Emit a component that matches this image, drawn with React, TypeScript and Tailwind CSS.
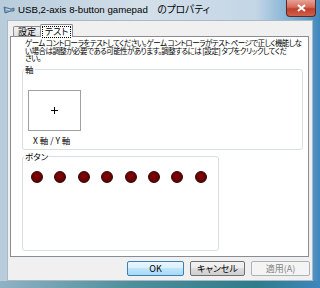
import React from 'react';

const jp = "font-['Noto_Sans_CJK_JP',sans-serif] [font-feature-settings:'palt']";

const GroupBox: React.FC<{ label: string; className?: string; children: React.ReactNode }> = ({
  label, className, children,
}) => (
  <fieldset className={`m-0 p-0 border border-[#d5dfe5] rounded-[3px] ${className ?? ''}`}>
    <legend className={`ml-[1px] px-[1px] text-[8.5px] leading-[10px] text-black ${jp}`}>{label}</legend>
    {children}
  </fieldset>
);

const PadIcon = () => (
  <svg width="12" height="10" viewBox="0 0 12 10">
    <path d="M1 2 L8 4 L11 3 L11 6 L8 6 L2 8 Z" fill="#7fa4c4" stroke="#3d5f80" strokeWidth="0.8" />
    <path d="M3 4 L7 5" stroke="#dfeaf4" strokeWidth="0.8" />
  </svg>
);

export default function App() {
  return (
    <div className="w-[320px] h-[288px] flex flex-col bg-[linear-gradient(to_right,#b8ccdb,#d3dfe9_45%,#c3d6e6_80%,#5f9fcb_96%,#3f86bd)] overflow-hidden">
      {/* Title bar */}
      <div className="h-[20px] flex items-start">
        <div className="mt-[5px] ml-[3px]">
          <PadIcon />
        </div>
        <span className="ml-[3px] mt-[3px] text-[9.7px] leading-[12px] text-black font-['Liberation_Sans','Noto_Sans_CJK_JP',sans-serif] whitespace-nowrap">
          USB,2-axis 8-button gamepad　<span className={jp}>のプロパティ</span>
        </span>
        <button className="ml-auto mr-[4px] w-[30px] h-[17px] rounded-b-[4px] border border-t-0 border-[#5a2a24] bg-[linear-gradient(to_bottom,#e7a195,#d56b5a_45%,#c1402c_55%,#d0604a)] flex items-center justify-center">
          <svg width="9" height="8" viewBox="0 0 9 8">
            <path d="M1 1 L8 7 M8 1 L1 7" stroke="#fff" strokeWidth="2" />
          </svg>
        </button>
      </div>

      {/* Client area */}
      <div className="mx-[7px] h-[261px] bg-[#f0f0f0] border border-[#a9b9c6] flex flex-col">
        {/* Tabs */}
        <div className={`mt-[3px] h-[13px] flex items-end ml-[5px] text-[9px] ${jp}`}>
          <div className="h-[11px] w-[28px] text-center border border-b-0 border-[#898c95] bg-[linear-gradient(#f2f2f2,#dcdcdc)] leading-[10px] rounded-t-[2px]">
            設定
          </div>
          <div className="h-[13px] px-[1px] pt-[1px] border border-b-0 border-[#898c95] bg-white leading-[10px] rounded-t-[2px] -ml-[1px] relative z-10">
            <span className="block border border-dotted border-black px-[2px] whitespace-nowrap">テスト</span>
          </div>
        </div>

        {/* Tab panel */}
        <div className="ml-[2px] mr-[3px] h-[221px] bg-white border border-[#898c95] -mt-[1px] flex flex-col">
          <div className={`pl-[14px] pt-[2px] text-[7.5px] leading-[7.5px] tracking-[-0.55px] text-black ${jp}`}>
            <div className="whitespace-nowrap">ゲーム コントローラをテストしてください。ゲーム コントローラがテスト ページで正しく機能しな</div>
            <div className="whitespace-nowrap">い場合は調整が必要である可能性があります。調整するには [設定] タブをクリックしてくだ</div>
            <div className="whitespace-nowrap">さい。</div>
          </div>

          <GroupBox label="軸" className="ml-[11px] w-[281px] h-[86px] mt-[2.5px]">
            <div className="ml-[5px] mt-[16px] w-[53px] h-[41px] border border-[#a0a0a0] flex items-center justify-center">
              <svg width="7" height="7" viewBox="0 0 7 7">
                <path d="M3.5 0 V7 M0 3.5 H7" stroke="#000" strokeWidth="1" />
              </svg>
            </div>
            <div className={`ml-[10px] mt-[5px] text-[8.5px] leading-[9px] text-black ${jp}`}>X 軸 / Y 軸</div>
          </GroupBox>

          <GroupBox label="ボタン" className="ml-[11px] w-[197px] h-[100px] mt-[1px]">
            <div className="ml-[8px] mt-[10px] flex gap-[11.4px]">
              {Array.from({ length: 8 }).map((_, i) => (
                <div
                  key={i}
                  className="w-[12px] h-[12px] rounded-full bg-[radial-gradient(circle_at_45%_40%,#840808,#690000_60%,#3a0000)] border border-[#2a0505]"
                />
              ))}
            </div>
          </GroupBox>
        </div>

        {/* Buttons */}
        <div className={`mt-[4px] flex justify-end gap-[6px] mr-[2px] text-[9px] ${jp}`}>
          <button className="w-[57px] h-[15px] rounded-[2px] border border-[#3c7fb1] bg-[linear-gradient(#eaf6fd,#d9f0fc_50%,#bee6fd_50%,#a7d9f5)] leading-[13px] text-black">
            OK
          </button>
          <button className="w-[55px] h-[15px] rounded-[2px] border border-[#707070] bg-[linear-gradient(#f2f2f2,#ebebeb_50%,#dddddd_50%,#cfcfcf)] leading-[13px] text-black">
            キャンセル
          </button>
          <button className="w-[59px] h-[15px] rounded-[2px] border border-[#adb2b5] bg-[#f4f4f4] leading-[13px] text-[#838383]">
            適用(A)
          </button>
        </div>
      </div>

      {/* Bottom frame */}
      <div className="flex-1 bg-[linear-gradient(to_right,#8fb2c4,#4f8f9c_40%,#2f7c8a_80%,#3f86bd)]" />
    </div>
  );
}
